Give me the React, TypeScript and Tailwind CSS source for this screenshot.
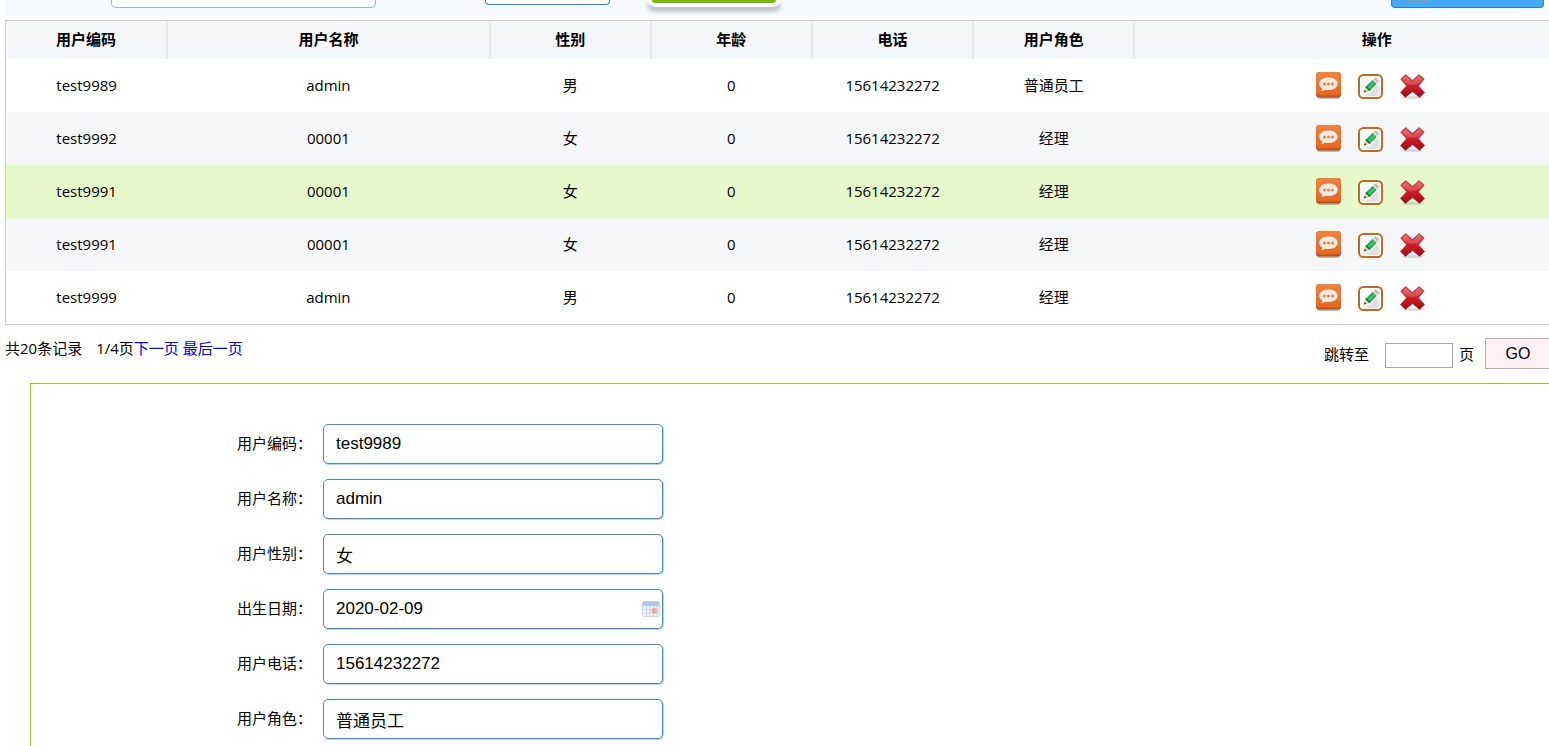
import React from "react";

type User = {
  code: string;
  name: string;
  gender: string;
  age: number;
  phone: string;
  role: string;
  active?: boolean;
};

const users: User[] = [
  { code: "test9989", name: "admin", gender: "男", age: 0, phone: "15614232272", role: "普通员工" },
  { code: "test9992", name: "00001", gender: "女", age: 0, phone: "15614232272", role: "经理" },
  { code: "test9991", name: "00001", gender: "女", age: 0, phone: "15614232272", role: "经理", active: true },
  { code: "test9991", name: "00001", gender: "女", age: 0, phone: "15614232272", role: "经理" },
  { code: "test9999", name: "admin", gender: "男", age: 0, phone: "15614232272", role: "经理" },
];

const columns = [
  { title: "用户编码", width: "w-[10%]" },
  { title: "用户名称", width: "w-[20%]" },
  { title: "性别", width: "w-[10%]" },
  { title: "年龄", width: "w-[10%]" },
  { title: "电话", width: "w-[10%]" },
  { title: "用户角色", width: "w-[10%]" },
  { title: "操作", width: "w-[30%]" },
];

const fields = [
  { id: "code", label: "用户编码：", value: "test9989" },
  { id: "name", label: "用户名称：", value: "admin" },
  { id: "gender", label: "用户性别：", value: "女" },
  { id: "birthday", label: "出生日期：", value: "2020-02-09", calendar: true },
  { id: "phone", label: "用户电话：", value: "15614232272" },
  { id: "role", label: "用户角色：", value: "普通员工" },
];

function ViewIcon() {
  return (
    <svg width="25" height="28" viewBox="0 0 25 28" aria-hidden="true">
      <defs>
        <linearGradient id="view-fill" x1="0" y1="0" x2="0" y2="1">
          <stop offset="0" stopColor="#ee8440" />
          <stop offset="1" stopColor="#e8651f" />
        </linearGradient>
      </defs>
      <rect x="0.5" y="3" width="24" height="24" rx="3.5" fill="#9b8a80" opacity="0.6" />
      <rect x="0" y="0" width="25" height="25.500" rx="3.5" fill="#b8521c" />
      <rect x="0" y="0" width="25" height="23.5" rx="3.5" fill="url(#view-fill)" />
      <path
        d="M12.500 5.500c-5.400 0-9.200 2.800-9.200 6.300 0 2.100 1.200 3.900 3.100 5-.1 1.100-.8 1.800-1.600 2.400 2-.1 3.500-.7 4.500-1.400 1 .2 2.100.3 3.200.3 5.400 0 9.200-2.700 9.200-6.300s-3.800-6.300-9.200-6.300z"
        fill="#fbe9e0"
      />
      <circle cx="8.500" cy="12" r="1.500" fill="#e5814f" />
      <circle cx="12.500" cy="12" r="1.500" fill="#e5814f" />
      <circle cx="16.500" cy="12" r="1.500" fill="#e5814f" />
    </svg>
  );
}

function EditIcon() {
  return (
    <svg width="25" height="28" viewBox="0 0 25 28" aria-hidden="true">
      <defs>
        <linearGradient id="edit-fill" x1="0" y1="0" x2="1" y2="1">
          <stop offset="0.4" stopColor="#fafafa" />
          <stop offset="1" stopColor="#dedee0" />
        </linearGradient>
      </defs>
      <rect x="1" y="3" width="23" height="23" rx="4.500" fill="url(#edit-fill)" stroke="#be6a20" strokeWidth="2" />
      <rect x="2.500" y="4.500" width="20" height="20" rx="3" fill="none" stroke="#fff" strokeWidth="1" />
      <path d="M7 21l5 1 8-9v7l-4 4h-6z" fill="#cfcfd2" opacity="0.5" />
      <path d="M6 20.500l1.400-5.500 4 4z" fill="#e5cf9c" />
      <path d="M6 20.500l.6-2.400 1.900 1.700z" fill="#333" />
      <path d="M7.400 15l7.400-7.200 4 3.900-7.400 7.300z" fill="#1fae54" />
      <path d="M9.200 16.600l7.200-7.100 1 1-7.200 7.100z" fill="#42d078" />
      <path d="M7.400 15l1-1 4 3.900-1 1.100z" fill="#1b6b3a" />
      <path d="M14.800 7.800l1-1 4 3.900-1 1z" fill="#dfe3e6" />
      <path d="M15.800 6.800l.8-.8q.9-.8 1.800 0l2 2q.8.900 0 1.800l-.600.900z" fill="#f2a0a6" />
    </svg>
  );
}

function DeleteIcon() {
  return (
    <svg width="25" height="28" viewBox="0 0 25 28" aria-hidden="true">
      <defs>
        <linearGradient id="delete-fill" x1="0" y1="0" x2="0" y2="1">
          <stop offset="0" stopColor="#e0575c" />
          <stop offset="0.4" stopColor="#d3222a" />
          <stop offset="1" stopColor="#a00a12" />
        </linearGradient>
      </defs>
      <ellipse cx="12.500" cy="25.500" rx="11" ry="1.500" fill="#999" opacity="0.35" />
      <path
        d="M5.800 2.600L12.400 8.600 19 2.600 24.200 7 18.400 13.800 24.500 20.600 19.600 25.400 12.500 19.600 5.400 25.400.5 20.600 6.600 13.800.7 7z"
        fill="url(#delete-fill)"
        stroke="#b9252b"
        strokeWidth="0.700"
        strokeLinejoin="round"
      />
      <path d="M5.800 3.900l6.600 6.100L19 3.900l3.700 3.200-4.200 4.600q-6 2-12 .2L2.200 7.100z" fill="#fff" opacity="0.18" />
    </svg>
  );
}

function CalendarIcon() {
  return (
    <svg width="18" height="16" viewBox="0 0 18 16" aria-hidden="true">
      <rect x="0.500" y="0.500" width="17" height="15" rx="1" fill="#eef3fa" stroke="#cfd3dc" />
      <rect x="1" y="1" width="16" height="4" fill="#b4c5ec" />
      <path d="M1 8.500h16M1 12h16M4.500 5v10M8 5v10M11.500 5v10M15 5v10" stroke="#cbd7ea" strokeWidth="1" />
      <circle cx="12.300" cy="9.800" r="2.700" fill="#f29c86" opacity="0.85" />
    </svg>
  );
}

function Toolbar() {
  return (
    <div className="flex h-[18px] items-start bg-[#f6fafd]">
      <input
        aria-label="用户名"
        className="ml-[106px] h-2 w-[265px] rounded-b-[5px] border border-t-0 border-[#8fb4d4] bg-white"
      />
      <button
        aria-label="查询"
        className="ml-[109px] h-[5px] w-[125px] rounded-b-[4px] border border-t-0 border-[#2a8fdb] bg-white"
      />
      <button
        aria-label="添加"
        className="ml-[38px] h-[7px] w-[132px] rounded-b-[7px] border-4 border-t-0 border-white bg-[#7fb512] shadow-[0_4px_4px_1px_rgba(0,0,0,0.22)]"
      />
      <button
        aria-label="导出"
        className="ml-[611px] flex h-2 w-[153px] items-start rounded-b-[4px] border border-t-0 border-[#1c84d4] bg-[#46a8f0] pl-4"
      >
        <span className="h-px w-5 bg-[#8b9fb5]" />
      </button>
    </div>
  );
}

function UserTable() {
  return (
    <div className="mt-0.5 border border-[#cbcbcb]">
      <table className="w-full table-fixed border-collapse text-center">
        <thead>
          <tr className="h-[38px] bg-[#f5f6f8]">
            {columns.map((column) => (
              <th
                key={column.title}
                className={`${column.width} border-r-2 border-[#e8e9eb] p-0 pb-0.5 font-bold last:border-r-0`}
              >
                {column.title}
              </th>
            ))}
          </tr>
        </thead>
        <tbody>
          {users.map((user, index) => (
            <tr
              key={index}
              className={`h-[53px] ${user.active ? "bg-[#e7f8ca]" : index % 2 ? "bg-[#f5f6f8]" : "bg-white"}`}
            >
              <td className="p-0 pb-0.5">{user.code}</td>
              <td className="p-0 pb-0.5">{user.name}</td>
              <td className="p-0 pb-0.5">{user.gender}</td>
              <td className="p-0 pb-0.5">{user.age}</td>
              <td className="p-0 pb-0.5">{user.phone}</td>
              <td className="p-0 pb-0.5">{user.role}</td>
              <td className="p-0">
                <div className="flex items-center justify-center gap-[17px] pr-3">
                  <a href="#view" aria-label="查看">
                    <ViewIcon />
                  </a>
                  <a href="#edit" aria-label="修改">
                    <EditIcon />
                  </a>
                  <a href="#delete" aria-label="删除">
                    <DeleteIcon />
                  </a>
                </div>
              </td>
            </tr>
          ))}
        </tbody>
      </table>
    </div>
  );
}

function Pagination() {
  return (
    <div className="flex h-[58px] items-start justify-between pr-[68px]">
      <div className="flex pt-[11px]">
        <span>共20条记录</span>
        <span className="ml-3.5">1/4页</span>
        <a href="#next" className="text-[#0000ee]">下一页</a>
        <a href="#last" className="ml-1 text-[#0000ee]">最后一页</a>
      </div>
      <div className="flex items-center pt-[13px]">
        <label htmlFor="page">跳转至</label>
        <input id="page" className="mt-1 ml-4 h-[25px] w-[68px] border border-[#a9a9a9] bg-white px-1" />
        <span className="ml-1.5">页</span>
        <button className="ml-[11px] h-[31px] w-[66px] border border-[#b5adb0] bg-[#fff0f5] font-['Liberation_Sans',sans-serif] text-base">
          GO
        </button>
      </div>
    </div>
  );
}

function UserForm() {
  return (
    <form className="ml-[25px] flex flex-col gap-[15px] border-t border-l border-[#9bc61f] pt-10 pb-10">
      {fields.map((field) => (
        <div key={field.id} className="flex items-center">
          <label htmlFor={field.id} className="w-[292px] pr-[11px] pb-0.5 text-right">
            {field.label}
          </label>
          <div className="relative">
            <input
              id={field.id}
              defaultValue={field.value}
              className="block h-10 w-[340px] rounded-[5px] border border-[#4a88c0] bg-white px-3 font-['Liberation_Sans','Noto_Sans_CJK_SC',sans-serif] text-[17px] shadow-[1px_1px_1px_#b9cfe2]"
            />
            {field.calendar && (
              <span className="absolute inset-y-0 right-[3px] flex items-center">
                <CalendarIcon />
              </span>
            )}
          </div>
        </div>
      ))}
    </form>
  );
}

export default function App() {
  return (
    <div className="h-screen overflow-hidden bg-white font-['Open_Sans','Noto_Sans_CJK_SC',sans-serif] text-[15px] leading-6 text-black">
      <main className="min-w-[1619px] pl-[5px]">
        <Toolbar />
        <UserTable />
        <Pagination />
        <UserForm />
      </main>
    </div>
  );
}
